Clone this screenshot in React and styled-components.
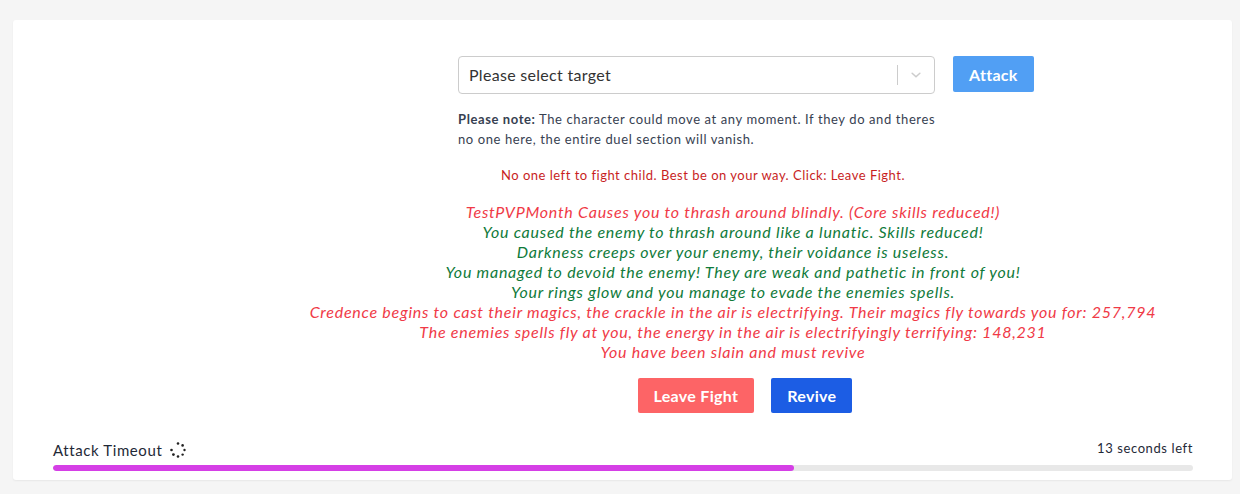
import styled, { createGlobalStyle } from 'styled-components';

const GlobalStyle = createGlobalStyle`
  html, body {
    margin: 0;
    padding: 0;
    background: #f5f5f5;
    font-family: Lato, "Noto Sans", sans-serif;
    color: #1f2937;
  }
`;

const Page = styled.div`
  padding: 20px 8px 14px 13px;
`;

const Card = styled.div`
  background: #fff;
  border-radius: 3px;
  box-shadow: 0 1px 2px rgba(0, 0, 0, 0.06);
  padding: 36px 39px 9px 40px;
  height: 460px;
  box-sizing: border-box;
  display: flex;
  flex-direction: column;
`;

const Duel = styled.div`
  display: flex;
  flex-direction: column;
`;

const TargetRow = styled.div`
  display: flex;
  align-items: flex-start;
  gap: 18px;
  margin-left: 405px;
`;

const Select = styled.div`
  width: 477px;
  height: 38px;
  box-sizing: border-box;
  border: 1px solid #cccccc;
  border-radius: 4px;
  display: flex;
  align-items: center;
  padding-left: 10px;
  font-size: 16px;
  letter-spacing: 0.3px;
  color: #333;
`;

const SelectValue = styled.div`
  flex: 1;
  margin-top: -2px;
`;

const Divider = styled.span`
  width: 1px;
  height: 20px;
  background: #cccccc;
`;

const Chevron = styled.div`
  width: 36px;
  display: flex;
  justify-content: center;
  color: #cccccc;
`;

const Button = styled.button`
  border: none;
  border-radius: 2px;
  color: #fff;
  font-family: inherit;
  font-weight: 700;
  font-size: 16px;
  letter-spacing: 0.3px;
  padding: 0 16px;
  height: ${(p) => p.$h || 35}px;
  background: ${(p) => p.$bg};
  cursor: pointer;
`;

const Note = styled.p`
  margin: 15px 0 0 405px;
  width: 482px;
  font-size: 13px;
  line-height: 20px;
  letter-spacing: 0.6px;
  color: #374151;

  strong {
    font-weight: 700;
  }
`;

const Notice = styled.p`
  margin: 16px 0 0 405px;
  width: 490px;
  text-align: center;
  font-size: 13px;
  line-height: 20px;
  letter-spacing: 0.5px;
  color: #c81e1e;
`;

const Log = styled.div`
  margin: 17px 0 0 220px;
  text-align: center;
  font-size: 16px;
  font-style: italic;
  line-height: 20px;
  letter-spacing: 0.75px;
`;

const LogLine = styled.div`
  color: ${(p) => (p.$good ? '#0f7a3a' : '#f03a47')};
`;

const Actions = styled.div`
  display: flex;
  justify-content: center;
  gap: 17px;
  margin: 16px 0 0 244px;
`;

const Timeout = styled.div`
  margin-top: auto;
`;

const TimeoutHead = styled.div`
  display: flex;
  justify-content: space-between;
  align-items: center;
`;

const TimeoutLabel = styled.div`
  display: flex;
  align-items: center;
  gap: 8px;
  font-size: 15px;
  letter-spacing: 0.6px;
  color: #1f2937;
`;

const TimeLeft = styled.div`
  font-size: 13px;
  letter-spacing: 0.6px;
  margin-top: -4px;
  color: #1f2937;
`;

const Track = styled.div`
  margin-top: 6px;
  height: 6px;
  border-radius: 3px;
  background: #e8e8e8;
  overflow: hidden;
`;

const Fill = styled.div`
  height: 100%;
  border-radius: 3px;
  background: #d53fe6;
`;

const log = [
  { text: 'TestPVPMonth Causes you to thrash around blindly. (Core skills reduced!)' },
  { text: 'You caused the enemy to thrash around like a lunatic. Skills reduced!', good: true },
  { text: 'Darkness creeps over your enemy, their voidance is useless.', good: true },
  { text: 'You managed to devoid the enemy! They are weak and pathetic in front of you!', good: true },
  { text: 'Your rings glow and you manage to evade the enemies spells.', good: true },
  { text: 'Credence begins to cast their magics, the crackle in the air is electrifying. Their magics fly towards you for: 257,794' },
  { text: 'The enemies spells fly at you, the energy in the air is electrifyingly terrifying: 148,231' },
  { text: 'You have been slain and must revive' },
];

function Spinner() {
  const dots = [
    [8, 1.5, 1.3],
    [12.6, 3.4, 1.3],
    [14.5, 8, 1.2],
    [12.6, 12.6, 1.2],
    [8, 14.5, 1.3],
    [3.4, 12.6, 1.4],
    [1.5, 8, 1.3],
  ];
  return (
    <svg width="16" height="16" viewBox="0 0 16 16">
      {dots.map(([cx, cy, r], i) => (
        <circle key={i} cx={cx} cy={cy} r={r} fill="#222" />
      ))}
    </svg>
  );
}

export default function App() {
  const progress = 65;
  return (
    <>
      <GlobalStyle />
      <Page>
        <Card>
          <Duel>
            <TargetRow>
              <Select>
                <SelectValue>Please select target</SelectValue>
                <Divider />
                <Chevron>
                  <svg width="14" height="14" viewBox="0 0 20 20">
                    <path
                      d="M4.5 7.5 L10 12.5 L15.5 7.5"
                      fill="none"
                      stroke="currentColor"
                      strokeWidth="2.2"
                      strokeLinecap="round"
                    />
                  </svg>
                </Chevron>
              </Select>
              <Button $bg="#519ff4" $h={36}>Attack</Button>
            </TargetRow>
            <Note>
              <strong>Please note:</strong> The character could move at any moment. If they do and theres
              no one here, the entire duel section will vanish.
            </Note>
            <Notice>No one left to fight child. Best be on your way. Click: Leave Fight.</Notice>
            <Log>
              {log.map((l, i) => (
                <LogLine key={i} $good={l.good}>
                  {l.text}
                </LogLine>
              ))}
            </Log>
            <Actions>
              <Button $bg="#fd6466">Leave Fight</Button>
              <Button $bg="#1c5de4">Revive</Button>
            </Actions>
          </Duel>
          <Timeout>
            <TimeoutHead>
              <TimeoutLabel>
                Attack Timeout <Spinner />
              </TimeoutLabel>
              <TimeLeft>13 seconds left</TimeLeft>
            </TimeoutHead>
            <Track>
              <Fill style={{ width: `${progress}%` }} />
            </Track>
          </Timeout>
        </Card>
      </Page>
    </>
  );
}
